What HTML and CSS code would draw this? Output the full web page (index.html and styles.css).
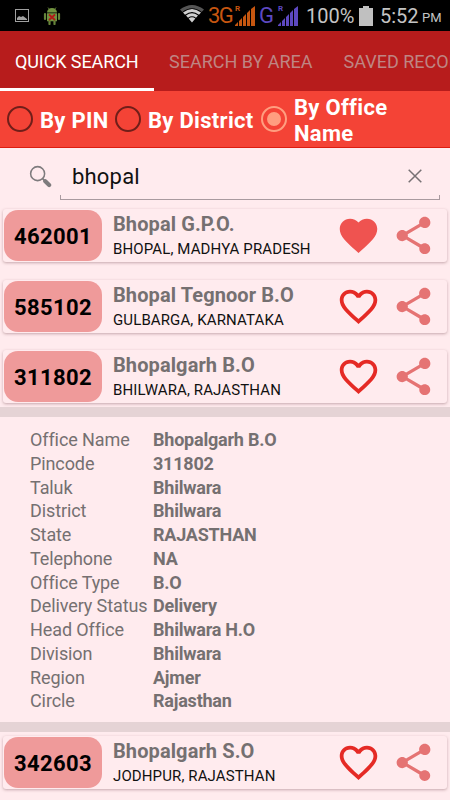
FILE: index.html
```html
<!DOCTYPE html>
<html lang="en">
<head>
    <meta charset="UTF-8">
    <meta name="viewport" content="width=device-width, initial-scale=1.0">
    <title>Pincode Search</title>
    <link rel="stylesheet" href="styles.css">
</head>
<body>
    <svg class="defs" width="0" height="0">
        <symbol id="heart" viewBox="0 0 24 24">
            <path d="M12 21.35l-1.45-1.32C5.4 15.36 2 12.28 2 8.5 2 5.42 4.42 3 7.5 3c1.74 0 3.41.81 4.5 2.09C13.09 3.81 14.76 3 16.5 3 19.58 3 22 5.42 22 8.5c0 3.78-3.4 6.86-8.55 11.54L12 21.35z"/>
        </symbol>
        <symbol id="heart-outline" viewBox="0 0 24 24">
            <path d="M16.5 3c-1.74 0-3.41.81-4.5 2.09C10.91 3.81 9.24 3 7.5 3 4.42 3 2 5.42 2 8.5c0 3.78 3.4 6.86 8.55 11.54L12 21.35l1.45-1.32C18.6 15.36 22 12.28 22 8.5 22 5.42 19.58 3 16.5 3zm-4.4 15.55l-.1.1-.1-.1C7.14 14.24 4 11.39 4 8.5 4 6.5 5.5 5 7.5 5c1.54 0 3.04.99 3.57 2.36h1.87C13.46 5.99 14.96 5 16.5 5c2 0 3.5 1.5 3.5 3.5 0 2.89-3.14 5.74-7.9 10.05z"/>
        </symbol>
        <symbol id="share" viewBox="0 0 24 24">
            <path d="M18 16.08c-.76 0-1.44.3-1.96.77L8.91 12.7c.05-.23.09-.46.09-.7s-.04-.47-.09-.7l7.05-4.11c.54.5 1.25.81 2.04.81 1.66 0 3-1.34 3-3s-1.34-3-3-3-3 1.34-3 3c0 .24.04.47.09.7L8.04 9.81C7.5 9.31 6.79 9 6 9c-1.66 0-3 1.34-3 3s1.34 3 3 3c.79 0 1.5-.31 2.04-.81l7.12 4.16c-.05.21-.08.43-.08.65 0 1.61 1.31 2.92 2.92 2.92 1.61 0 2.92-1.31 2.92-2.92s-1.31-2.92-2.92-2.92z"/>
        </symbol>
        <symbol id="signal" viewBox="0 0 20 20">
            <path d="M0 20v-1l3-3v4zM4 20v-5l3-3v8zM8 20v-9l3-3v12zM12 20V7l3-3v16zM16 20V3l4-3v20z"/>
        </symbol>
    </svg>

    <div class="status-bar">
        <svg class="status-image" viewBox="0 0 14 13">
            <rect x=".5" y=".5" width="13" height="12" fill="none" stroke="#a0a0a0"/>
            <path d="M2 11V9l2-2 2 1 2-1 4 3v1z" fill="#a0a0a0"/>
        </svg>
        <svg class="status-android" viewBox="0 0 18 18">
            <path d="M4 5.500a5 4.500 0 0 1 10 0zM4 6.200h10v8H4z" fill="#71923f"/>
            <path d="M5 .5l1.500 2M13 .5l-1.500 2" stroke="#71923f" stroke-width=".8"/>
            <path d="M2 7v5M16 7v5M6.500 13v4M11.500 13v4" stroke="#65843a" stroke-width="2.200" stroke-linecap="round"/>
            <path d="M6 7.500l6 5.500M12 7.500L6 13" stroke="#b31818" stroke-width="1.700"/>
        </svg>
        <svg class="status-wifi" viewBox="0 0 24 18">
            <path d="M0 4.500Q12-4.500 24 4.500L21.700 7Q12-.5 2.300 7z" fill="#555"/>
            <path d="M3 7.500Q12 .5 21 7.500L19 9.700Q12 4.300 5 9.700zM6 10.500Q12 6 18 10.500L16 12.700Q12 9.800 8 12.700zM8.600 13.400Q12 11 15.400 13.400L12 17.500z" fill="#d0d0d0"/>
        </svg>
        <span class="net net-3g">3G</span>
        <span class="signal signal-3g"><i>R</i><svg><use href="#signal"/></svg></span>
        <span class="net net-g">G</span>
        <span class="signal signal-g"><i>R</i><svg><use href="#signal"/></svg></span>
        <span class="percent">100%</span>
        <svg class="battery" viewBox="0 0 14 20"><path d="M4 0h6v2h4v18H0V2h4z" fill="#c0c0c0"/></svg>
        <span class="time">5:52</span>
        <span class="ampm">PM</span>
    </div>

    <nav class="tabs">
        <a class="tab active">QUICK SEARCH</a>
        <a class="tab">SEARCH BY AREA</a>
        <a class="tab">SAVED RECORDS</a>
    </nav>

    <div class="filters">
        <div class="radio pin"><span class="dot"></span><span>By PIN</span></div>
        <div class="radio district"><span class="dot"></span><span>By District</span></div>
        <div class="radio office checked"><span class="dot"></span><span>By Office Name</span></div>
    </div>

    <div class="search">
        <svg class="search-icon" viewBox="0 0 24 24">
            <circle cx="9" cy="9" r="7.300" fill="none" stroke="#7e7b7d" stroke-width="1.600"/>
            <path d="M14 14l3 3" stroke="#7e7b7d" stroke-width="1.800"/>
            <path d="M17 17l4 3.800" stroke="#7e7b7d" stroke-width="4.400" stroke-linecap="round"/>
        </svg>
        <div class="search-field">
            <span class="query">bhopal</span>
            <svg class="clear" viewBox="0 0 14 14"><path d="M.7.7l12.600 12.600M13.300.7L.7 13.300" stroke="#777174" stroke-width="1.500"/></svg>
        </div>
    </div>

    <div class="results">
        <div class="card">
            <div class="pincode">462001</div>
            <div class="info">
                <div class="office-name">Bhopal G.P.O.</div>
                <div class="place">BHOPAL, MADHYA PRADESH</div>
            </div>
            <svg class="fav saved"><use href="#heart"/></svg>
            <svg class="share"><use href="#share"/></svg>
        </div>
        <div class="card">
            <div class="pincode">585102</div>
            <div class="info">
                <div class="office-name">Bhopal Tegnoor B.O</div>
                <div class="place">GULBARGA, KARNATAKA</div>
            </div>
            <svg class="fav"><use href="#heart-outline"/></svg>
            <svg class="share"><use href="#share"/></svg>
        </div>
        <div class="card">
            <div class="pincode">311802</div>
            <div class="info">
                <div class="office-name">Bhopalgarh B.O</div>
                <div class="place">BHILWARA, RAJASTHAN</div>
            </div>
            <svg class="fav"><use href="#heart-outline"/></svg>
            <svg class="share"><use href="#share"/></svg>
        </div>
    </div>

    <dl class="details">
        <dt>Office Name</dt><dd>Bhopalgarh B.O</dd>
        <dt>Pincode</dt><dd>311802</dd>
        <dt>Taluk</dt><dd>Bhilwara</dd>
        <dt>District</dt><dd>Bhilwara</dd>
        <dt>State</dt><dd>RAJASTHAN</dd>
        <dt>Telephone</dt><dd>NA</dd>
        <dt>Office Type</dt><dd>B.O</dd>
        <dt>Delivery Status</dt><dd>Delivery</dd>
        <dt>Head Office</dt><dd>Bhilwara H.O</dd>
        <dt>Division</dt><dd>Bhilwara</dd>
        <dt>Region</dt><dd>Ajmer</dd>
        <dt>Circle</dt><dd>Rajasthan</dd>
    </dl>

    <div class="results last">
        <div class="card">
            <div class="pincode">342603</div>
            <div class="info">
                <div class="office-name">Bhopalgarh S.O</div>
                <div class="place">JODHPUR, RAJASTHAN</div>
            </div>
            <svg class="fav"><use href="#heart-outline"/></svg>
            <svg class="share"><use href="#share"/></svg>
        </div>
    </div>
</body>
</html>
```
FILE: styles.css
```css
* {
    margin: 0;
    padding: 0;
    box-sizing: border-box;
}

body {
    width: 450px;
    height: 800px;
    overflow: hidden;
    font-family: Roboto, sans-serif;
    background: #ffebee;
}

svg {
    display: block;
    flex: none;
}

.defs {
    position: absolute;
}

/* status bar */
.status-bar {
    display: flex;
    align-items: center;
    height: 31px;
    padding-left: 15px;
    background: #000;
    color: #c4c4c4;
    white-space: nowrap;
}

.status-image {
    width: 14px;
    height: 13px;
}

.status-android {
    width: 18px;
    height: 18px;
    margin-left: 14px;
}

.status-wifi {
    width: 24px;
    height: 18px;
    margin: -3px 0 0 119px;
}

.net {
    font-size: 22px;
    line-height: 31px;
}

.net-3g {
    width: 25px;
    margin-left: 4px;
    color: #c65610;
    letter-spacing: -1.5px;
}

.net-g {
    width: 15px;
    margin-left: 4px;
    color: #5d48c0;
}

.signal {
    position: relative;
    width: 20px;
    height: 20px;
    margin-left: 2px;
    fill: currentColor;
}

.signal svg {
    width: 20px;
    height: 20px;
}

.signal i {
    position: absolute;
    top: -2px;
    left: 0;
    font: bold 8px Roboto, sans-serif;
}

.signal-3g {
    color: #c65610;
}

.signal-g {
    margin-left: 4px;
    color: #5d48c0;
}

.percent {
    width: 48px;
    margin-left: 8px;
    font-size: 20px;
}

.battery {
    width: 14px;
    height: 20px;
    margin-left: 5px;
}

.time {
    width: 38px;
    margin-left: 7px;
    font-size: 20px;
}

.ampm {
    margin: 4px 0 0 4px;
    font-size: 13px;
}

/* tabs */
.tabs {
    display: flex;
    height: 60px;
    background: #b71c1c;
    overflow: hidden;
}

.tab {
    flex: none;
    padding: 0 16px 0 15px;
    font-size: 18px;
    line-height: 62px;
    color: #bf8583;
    white-space: nowrap;
}

.tab.active {
    width: 154px;
    color: #fff;
    letter-spacing: -0.1px;
    box-shadow: inset 0 -3px #fff;
}

/* search filters */
.filters {
    display: flex;
    align-items: center;
    height: 57px;
    padding-left: 7px;
    background: #f44336;
    border-bottom: 1px solid #dc1d10;
    color: #fff;
    font-size: 22px;
    font-weight: 700;
    letter-spacing: 0.3px;
    line-height: 26px;
}

.radio {
    display: flex;
    align-items: center;
    gap: 7px;
}

.radio span + span {
    padding-top: 3px;
}

.pin {
    width: 108px;
}

.district {
    width: 146px;
}

.office {
    width: 150px;
}

.dot {
    flex: none;
    width: 26px;
    height: 26px;
    border: 2.5px solid #701e19;
    border-radius: 50%;
}

.checked .dot {
    padding: 4px;
    border-color: #ff9e80;
    background: #ff9e80 content-box;
}

/* search input */
.search {
    display: flex;
    height: 52px;
    padding: 17px 10px 0 29px;
}

.search-icon {
    width: 23px;
    height: 23px;
    margin-right: 8px;
}

.search-field {
    display: flex;
    flex: 1;
    justify-content: space-between;
    height: 35px;
    padding: 0 18px 0 12px;
    border-bottom: 1px solid #a99a9f;
    background: linear-gradient(#a99a9f, #a99a9f) left bottom / 1px 4px no-repeat,
        linear-gradient(#a99a9f, #a99a9f) right bottom / 1px 4px no-repeat;
}

.query {
    font-size: 22px;
    letter-spacing: 0.2px;
    line-height: 24px;
    color: #111;
}

.clear {
    width: 14px;
    height: 14px;
    margin-top: 4px;
}

/* result cards */
.results {
    display: flex;
    flex-direction: column;
    gap: 17.500px;
    padding: 9px 3px 4px;
}

.results.last {
    padding-top: 4px;
}

.card {
    display: flex;
    align-items: center;
    height: 53px;
    padding-left: 1px;
    border-radius: 3px;
    background: #ffebee;
    box-shadow: 0 1px 3px rgba(90, 40, 50, 0.35);
}

.pincode {
    width: 98px;
    height: 51px;
    border-radius: 14px;
    background: #ef9a9a;
    color: #000;
    font-size: 22px;
    font-weight: 700;
    letter-spacing: 0.4px;
    line-height: 53px;
    text-align: center;
}

.info {
    width: 223px;
    padding: 2px 0 0 11px;
    white-space: nowrap;
}

.office-name {
    color: #757071;
    font-size: 20px;
    font-weight: 700;
    letter-spacing: 0.1px;
    line-height: 26px;
}

.place {
    color: #111;
    font-size: 15px;
    letter-spacing: 0.12px;
    line-height: 25px;
}

.fav {
    width: 45px;
    height: 45px;
    margin-left: 11px;
    fill: #e52a25;
}

.fav.saved {
    fill: #ef5350;
}

.share {
    width: 45px;
    height: 45px;
    margin-left: 10px;
    fill: #e57373;
}

/* expanded office details */
.details {
    display: grid;
    grid-template-columns: 123px 1fr;
    grid-auto-rows: 23.750px;
    height: 325px;
    padding: 11px 0 0 30px;
    border: solid #e5d3d5;
    border-width: 10px 0;
    color: #757071;
    font-size: 18px;
    letter-spacing: -0.1px;
    line-height: 24px;
    white-space: nowrap;
}

.details dd {
    font-weight: 700;
    letter-spacing: -0.22px;
}
```
